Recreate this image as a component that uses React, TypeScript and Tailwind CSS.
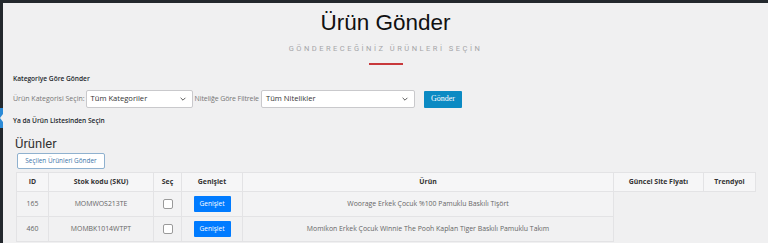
import React from "react";

const rows = [
  { id: "165", sku: "MOMWOS213TE", name: "Woorage Erkek Çocuk %100 Pamuklu Baskılı Tişört" },
  { id: "460", sku: "MOMBK1014WTPT", name: "Momikon Erkek Çocuk Winnie The Pooh Kaplan Tiger Baskılı Pamuklu Takım" },
];

function Chevron() {
  return (
    <svg width="8" height="8" viewBox="0 0 10 10" className="text-[#555]">
      <path d="M2 3.5 L5 6.5 L8 3.5" fill="none" stroke="currentColor" strokeWidth="1.2" />
    </svg>
  );
}

export default function App() {
  return (
    <div className="w-[768px] h-[243px] overflow-hidden bg-[#f0f0f1] flex flex-col font-['Open_Sans',sans-serif]">
      <div className="h-[3px] w-full bg-[#23282d] shrink-0" />
      <div className="flex flex-1 min-h-0">
        {/* admin sidebar edge */}
        <div className="w-[3px] bg-[#23282d] shrink-0 flex flex-col">
          <div className="h-[105px]" />
          <div className="h-[20px] bg-[#2b8ad6] relative">
            <div className="absolute right-0 top-[6px] w-0 h-0 border-y-[4px] border-y-transparent border-r-[3px] border-r-[#f0f0f1]" />
          </div>
        </div>

        <div className="flex-1 flex flex-col pl-[10px] pr-[10px]">
          {/* heading */}
          <div className="flex flex-col items-center pt-[7px]">
            <h1 className="font-['Liberation_Sans',Arial,sans-serif] text-[22.5px] leading-[26px] text-[#111]">Ürün Gönder</h1>
            <p className="mt-[8px] font-['Roboto',sans-serif] text-[7.5px] leading-[9px] tracking-[2.5px] text-[#a5a5a8]">
              GÖNDERECEĞİNİZ ÜRÜNLERİ SEÇİN
            </p>
            <div className="mt-[10px] w-[34px] h-[2px] bg-[#c8393c]" />
          </div>

          <p className="mt-[9px] text-[6.6px] leading-[9px] font-semibold text-[#23282d]">Kategoriye Göre Gönder</p>

          <div className="mt-[7px] flex items-center h-[18px]">
            <span className="text-[7px] text-[#777] mr-[1px]">Ürün Kategorisi Seçin:</span>
            <div className="w-[107px] h-[18px] bg-white border border-[#c9c9cc] rounded-[2px] flex items-center justify-between pl-[4px] pr-[5px]">
              <span className="text-[7.6px] text-[#333]">Tüm Kategoriler</span>
              <Chevron />
            </div>
            <span className="text-[7px] tracking-[-0.1px] text-[#777] ml-[2px] mr-[2px]">Niteliğe Göre Filtrele</span>
            <div className="w-[154px] h-[18px] bg-white border border-[#c9c9cc] rounded-[2px] flex items-center justify-between pl-[4px] pr-[5px]">
              <span className="text-[7.6px] text-[#333]">Tüm Nitelikler</span>
              <Chevron />
            </div>
            <button className="ml-[9px] w-[38px] h-[17px] bg-[#0b8ac3] text-white font-['Liberation_Serif',serif] text-[8px] rounded-[1px]">
              Gönder
            </button>
          </div>

          <p className="mt-[8px] text-[6.6px] leading-[9px] font-semibold text-[#23282d]">Ya da Ürün Listesinden Seçin</p>

          <h2 className="mt-[10px] ml-[2px] font-['Roboto',sans-serif] text-[13px] leading-[17px] text-[#333]">Ürünler</h2>

          <button className="ml-[4px] mt-[1px] self-start w-[88px] h-[16px] bg-white border border-[#8fb1cf] rounded-[2px] text-[6.4px] text-[#3b74a8]">
            Seçilen Ürünleri Gönder
          </button>

          <table className="ml-[3px] mt-[3px] border-collapse text-[6.9px] table-fixed w-[739px]">
            <colgroup>
              <col className="w-[32px]" />
              <col className="w-[105px]" />
              <col className="w-[28px]" />
              <col className="w-[61px]" />
              <col className="w-[371px]" />
              <col className="w-[90px]" />
              <col className="w-[52px]" />
            </colgroup>
            <thead>
              <tr className="h-[19px] bg-[#f6f6f7] text-[#333]">
                {["ID", "Stok kodu (SKU)", "Seç", "Genişlet", "Ürün", "Güncel Site Fiyatı", "Trendyol"].map((h) => (
                  <th key={h} className="border border-[#e3e3e5] font-bold">{h}</th>
                ))}
              </tr>
            </thead>
            <tbody>
              {rows.map((r, i) => (
                <tr key={r.id} className={`h-[25px] text-[#666] ${i === 0 ? "bg-[#f3f3f4]" : "bg-[#f1f1f2]"}`}>
                  <td className="border border-[#e3e3e5] text-center">{r.id}</td>
                  <td className="border border-[#e3e3e5] text-center">{r.sku}</td>
                  <td className="border border-[#e3e3e5]">
                    <div className="mx-auto w-[10px] h-[10px] bg-white border border-[#9a9a9a] rounded-[2px]" />
                  </td>
                  <td className="border border-[#e3e3e5] text-center">
                    <button className="w-[37px] h-[16px] bg-[#007bff] text-white text-[6.6px] rounded-[1px]">Genişlet</button>
                  </td>
                  <td className="border border-[#e3e3e5] text-center whitespace-nowrap">{r.name}</td>
                </tr>
              ))}
            </tbody>
          </table>
        </div>
      </div>
    </div>
  );
}
